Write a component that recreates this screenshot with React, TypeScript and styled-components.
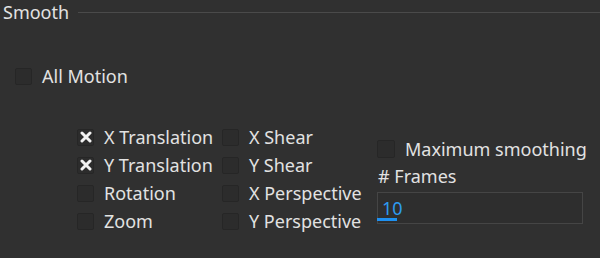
import React from 'react';
import styled, { createGlobalStyle } from 'styled-components';

const GlobalStyle = createGlobalStyle`
  html, body {
    margin: 0;
    padding: 0;
    background: #303030;
  }
  body {
    font-family: "Noto Sans", "Open Sans", sans-serif;
    color: #e2e2e2;
    width: 600px;
    height: 258px;
    overflow: hidden;
  }
`;

const Panel = styled.div`
  width: 600px;
  height: 258px;
  display: flex;
  flex-direction: column;
`;

const Legend = styled.div`
  display: flex;
  align-items: center;
  height: 24px;
  padding-left: 3px;
`;

const LegendTitle = styled.span`
  font-size: 18px;
  line-height: 24px;
`;

const LegendRule = styled.div`
  flex: 1;
  height: 1px;
  background: #4a4a4a;
  margin-left: 9px;
`;

const TopRow = styled.div`
  margin-top: 42px;
  padding-left: 15px;
`;

const Options = styled.div`
  display: flex;
  margin-top: 37px;
  padding-left: 77px;
`;

const Grid = styled.div`
  display: grid;
  grid-template-columns: 145px 155px;
  grid-auto-rows: 28px;
`;

const Item = styled.label`
  display: flex;
  align-items: center;
  gap: 10px;
  font-size: 18px;
  line-height: 20px;
  white-space: nowrap;
`;

const Box = styled.span`
  width: 17px;
  height: 17px;
  box-sizing: border-box;
  border: 1px solid #262626;
  background: #2c2c2c;
  border-radius: 2px;
  display: flex;
  align-items: center;
  justify-content: center;
  flex-shrink: 0;
`;

const SideColumn = styled.div`
  display: flex;
  flex-direction: column;
  padding-top: 16px;
`;

const SideItem = styled(Item)`
  & > span:first-child {
    width: 18px;
    height: 18px;
  }
`;

const FieldLabel = styled.div`
  font-size: 18px;
  line-height: 20px;
  margin-top: 7px;
  margin-left: 1px;
`;

const Field = styled.div`
  position: relative;
  margin-top: 6px;
  width: 206px;
  height: 32px;
  box-sizing: border-box;
  border: 1px solid #454545;
  background: #2e2e2e;
  display: flex;
  align-items: center;
  padding-left: 4px;
`;

const FieldValue = styled.span`
  font-size: 18px;
  color: #2d9bf0;
`;

const FocusBar = styled.span`
  position: absolute;
  left: -1px;
  bottom: 2px;
  width: 20px;
  height: 3px;
  background: #1e90f0;
`;

const Cross = () => (
  <svg width="12" height="12" viewBox="0 0 12 12">
    <path d="M2 2 L10 10 M10 2 L2 10" stroke="#f2f2f2" strokeWidth="3" strokeLinecap="round" />
  </svg>
);

const Check = ({ label, checked }: { label: string; checked?: boolean }) => (
  <Item>
    <Box>{checked && <Cross />}</Box>
    <span>{label}</span>
  </Item>
);

export default function App() {
  return (
    <Panel>
      <GlobalStyle />
      <Legend>
        <LegendTitle>Smooth</LegendTitle>
        <LegendRule />
      </Legend>
      <TopRow>
        <Check label="All Motion" />
      </TopRow>
      <Options>
        <Grid>
          <Check label="X Translation" checked />
          <Check label="X Shear" />
          <Check label="Y Translation" checked />
          <Check label="Y Shear" />
          <Check label="Rotation" />
          <Check label="X Perspective" />
          <Check label="Zoom" />
          <Check label="Y Perspective" />
        </Grid>
        <SideColumn>
          <SideItem>
            <Box />
            <span>Maximum smoothing</span>
          </SideItem>
          <FieldLabel># Frames</FieldLabel>
          <Field>
            <FieldValue>10</FieldValue>
            <FocusBar />
          </Field>
        </SideColumn>
      </Options>
    </Panel>
  );
}
